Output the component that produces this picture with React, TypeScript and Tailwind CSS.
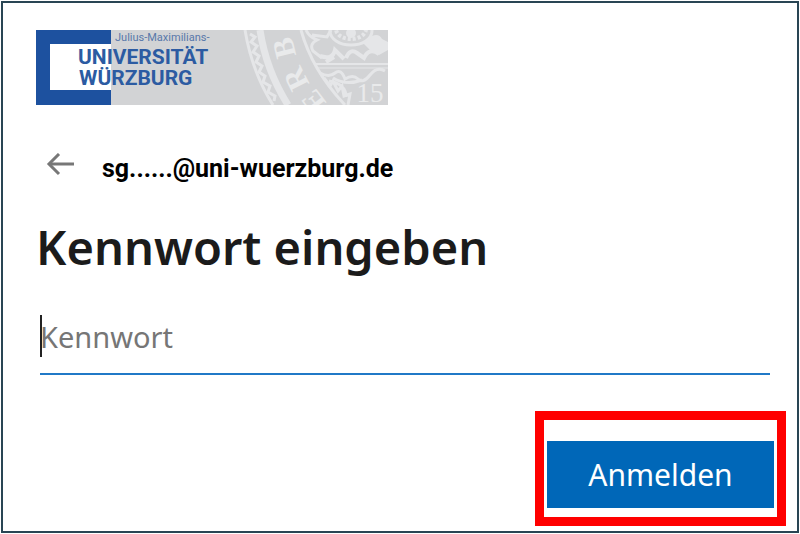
import { useState } from "react"

function UniversityLogo() {
  return (
    <svg viewBox="0 0 352 75" className="block h-[75px] w-[352px]" role="img" aria-label="Universität Würzburg">
      <rect width="352" height="75" fill="#d2d3d5" />

      {/* Seal */}
      <g fill="none" stroke="#e5e6e8">
        <path d="M209 0Q216 42 237 75" strokeWidth="3" />
        <path d="M224 0Q230 40 252 75" strokeWidth="7" />
        <path d="M214 4l5 3-4 5 6 4-4 6 6 4-3 6 6 4-3 6 6 4-2 6 7 4-2 6 7 4-1 5" strokeWidth="3" />
        <path d="M265 0Q276 40 309 75" strokeWidth="3" />
        <path d="M270 0q3 7 11 10-8 4-4 11l9 7M276 5l15 2 4-7" strokeWidth="3" />
        <path d="M280 34h72" strokeWidth="2" />
        <path d="M281 38h71" strokeWidth="1" />
        <ellipse cx="315" cy="1" rx="21" ry="14" strokeWidth="3" />
        <ellipse cx="315" cy="-1" rx="15" ry="10" strokeWidth="4" strokeDasharray="3 2" />
        <path d="M284 26q13 4 15-6l9 9M310 28q4-10 11-5t7 5q5-11 15-4M290 32l8-5" strokeWidth="4" />
        <path d="M284 43q9 5 15 0t10 6q8-5 13 0t12-4 15-4M297 48q13 8 29 2" strokeWidth="3" />
        <path d="M288 48l6 8 3-5 5 10 4-5 2 10 6-2-2 11M293 51q17 3 17 16" strokeWidth="3" />
      </g>
      <g fill="#e5e6e8">
        <path d="M327 13q5-3 9-7 7-3 10 3l6 3v8l-9 5-9-5z" />
        <circle cx="315" cy="3" r="5" />
      </g>
      <g fill="#e9eaeb" fontFamily="'Liberation Serif', serif" fontWeight="700" textAnchor="middle">
        <text x="248" y="28" fontSize="30" transform="rotate(-104 248 18)">B</text>
        <text x="260" y="59" fontSize="30" transform="rotate(-117 260 49)">R</text>
        <text x="277" y="81" fontSize="29" transform="rotate(-127 277 71)">E</text>
        <text x="334" y="72" fontSize="27" fontWeight="400">15</text>
      </g>

      {/* Wordmark */}
      <path d="M0 0H75V14H14V60H75V75H0Z" fill="#1d519f" />
      <rect x="14" y="14" width="61" height="46" fill="#fff" />
      <g fill="#2c5ba2" fontFamily="Roboto, sans-serif">
        <text x="79" y="11" fontSize="11" fill="#5878aa">Julius-Maximilians-</text>
        <text x="42" y="34" fontSize="21" fontWeight="700">UNIVERSITÄT</text>
        <text x="43" y="55" fontSize="21" fontWeight="700">WÜRZBURG</text>
      </g>
    </svg>
  )
}

export default function App() {
  const [password, setPassword] = useState("")

  return (
    <div className="min-h-screen bg-white p-px font-['Noto_Sans',sans-serif]">
      <main className="min-h-[532px] border-2 border-[#294554] pt-[27px] pr-[11px] pl-[33px]">
        <UniversityLogo />

        <form onSubmit={(e) => e.preventDefault()}>
          {/* Account */}
          <div className="mt-10 flex h-10 items-center gap-6">
            <button type="button" aria-label="Zurück" className="ml-2 text-[#777]">
              <svg viewBox="0 0 32 24" className="h-6 w-8" fill="none" stroke="currentColor" strokeWidth="3">
                <path d="M5 11H30" />
                <path d="M15 1L5 11L15 21" />
              </svg>
            </button>
            <p className="pt-2 pl-0.5 font-['Roboto',sans-serif] text-[25px] leading-8 font-bold text-black">
              sg......@uni-wuerzburg.de
            </p>
          </div>

          <h1 className="mt-[26px] text-[47px] leading-[72px] font-semibold text-[#1b1b1b]">Kennwort eingeben</h1>

          {/* Password field */}
          <div className="relative mt-5 mr-4 ml-1">
            <label htmlFor="password" className="sr-only">
              Kennwort
            </label>
            <input
              id="password"
              type="password"
              placeholder="Kennwort"
              value={password}
              onChange={(e) => setPassword(e.target.value)}
              className="block h-[72px] w-full border-b-2 border-[#2079c7] pb-1 text-[29px] text-[#1b1b1b] outline-none placeholder:text-[#767676]"
            />
            <span className="absolute top-3 left-0 h-[42px] w-0.5 bg-[#222]" />
          </div>

          <div className="mt-9 ml-auto w-[251px] border-[9px] border-[#ff0000] px-[3px] pt-[21px] pb-[9px]">
            <button type="submit" className="h-[67px] w-full bg-[#0067b8] text-[30px] text-white">
              Anmelden
            </button>
          </div>
        </form>
      </main>
    </div>
  )
}
